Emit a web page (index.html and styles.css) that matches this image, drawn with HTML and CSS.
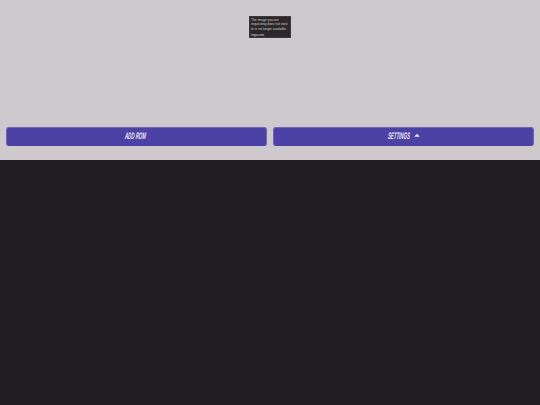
FILE: index.html
```html
<!DOCTYPE html>
<html lang="en">
<head>
<meta charset="utf-8">
<title>ROM settings</title>
<link rel="stylesheet" href="styles.css">
</head>
<body>
<section class="top">
  <div class="preview">
    <div class="removed">
      <p class="removed-text">The image you are<br>requesting does not exist<br>or is no longer available.</p>
      <p class="removed-site">imgur.com</p>
    </div>
  </div>
  <div class="actions">
    <button class="btn" type="button"><span class="label label-add">Add ROM</span></button>
    <button class="btn" type="button"><span class="label label-settings">Settings</span><svg class="caret" viewBox="0 0 8 4" width="7" height="4" aria-hidden="true"><path d="M0.3 3.7 L3 0.6 Q4 -0.2 5 0.6 L7.7 3.7 Z" fill="#f1eff6"/></svg></button>
  </div>
</section>
<main class="bottom"></main>
</body>
</html>
```
FILE: styles.css
```css
* { box-sizing: border-box; }
html, body { margin: 0; height: 100%; }
body { background: #211e21; overflow: hidden; font-family: "Liberation Sans", sans-serif; }
.top {
  height: 160px;
  background: #cdc9cc;
  padding: 16px 6px 14px;
  display: flex;
  flex-direction: column;
  justify-content: space-between;
}
.preview { display: flex; justify-content: center; }
.removed {
  width: 42px;
  height: 22px;
  background: #2a2829;
  border: 1px solid #3a3839;
  padding: 1px 1px 0 1px;
  color: #d0cecf;
}
.removed-text { margin: 0; font-size: 3.3px; line-height: 4.4px; white-space: nowrap; }
.removed-site { margin: 2.5px 0 0; font-size: 2.6px; line-height: 3px; font-weight: bold; color: #bdbbbc; }
.actions { display: grid; grid-template-columns: 1fr 1fr; gap: 6px; }
.btn {
  height: 19px;
  padding: 0 0 2px;
  background: #4c41a5;
  border: 1px solid #6f66b5;
  border-bottom-color: #4c41a5;
  border-radius: 3px;
  color: #ece9f6;
  display: flex;
  align-items: center;
  justify-content: center;
  gap: 2px;
  font-family: "Liberation Sans", sans-serif;
}
.label {
  font-size: 9.5px;
  line-height: 12px;
  font-style: italic;
  font-weight: bold;
  text-transform: uppercase;
  white-space: nowrap;
  text-align: left;
  display: inline-block;
  transform: scaleX(0.46) skewX(-12deg);
  transform-origin: left center;
}
.label-add { width: 23px; }
.label-settings { width: 24px; }
.caret { display: block; width: 6px; height: 3px; margin-bottom: 1px; }
.bottom { height: 245px; background: #211e21; }
```
